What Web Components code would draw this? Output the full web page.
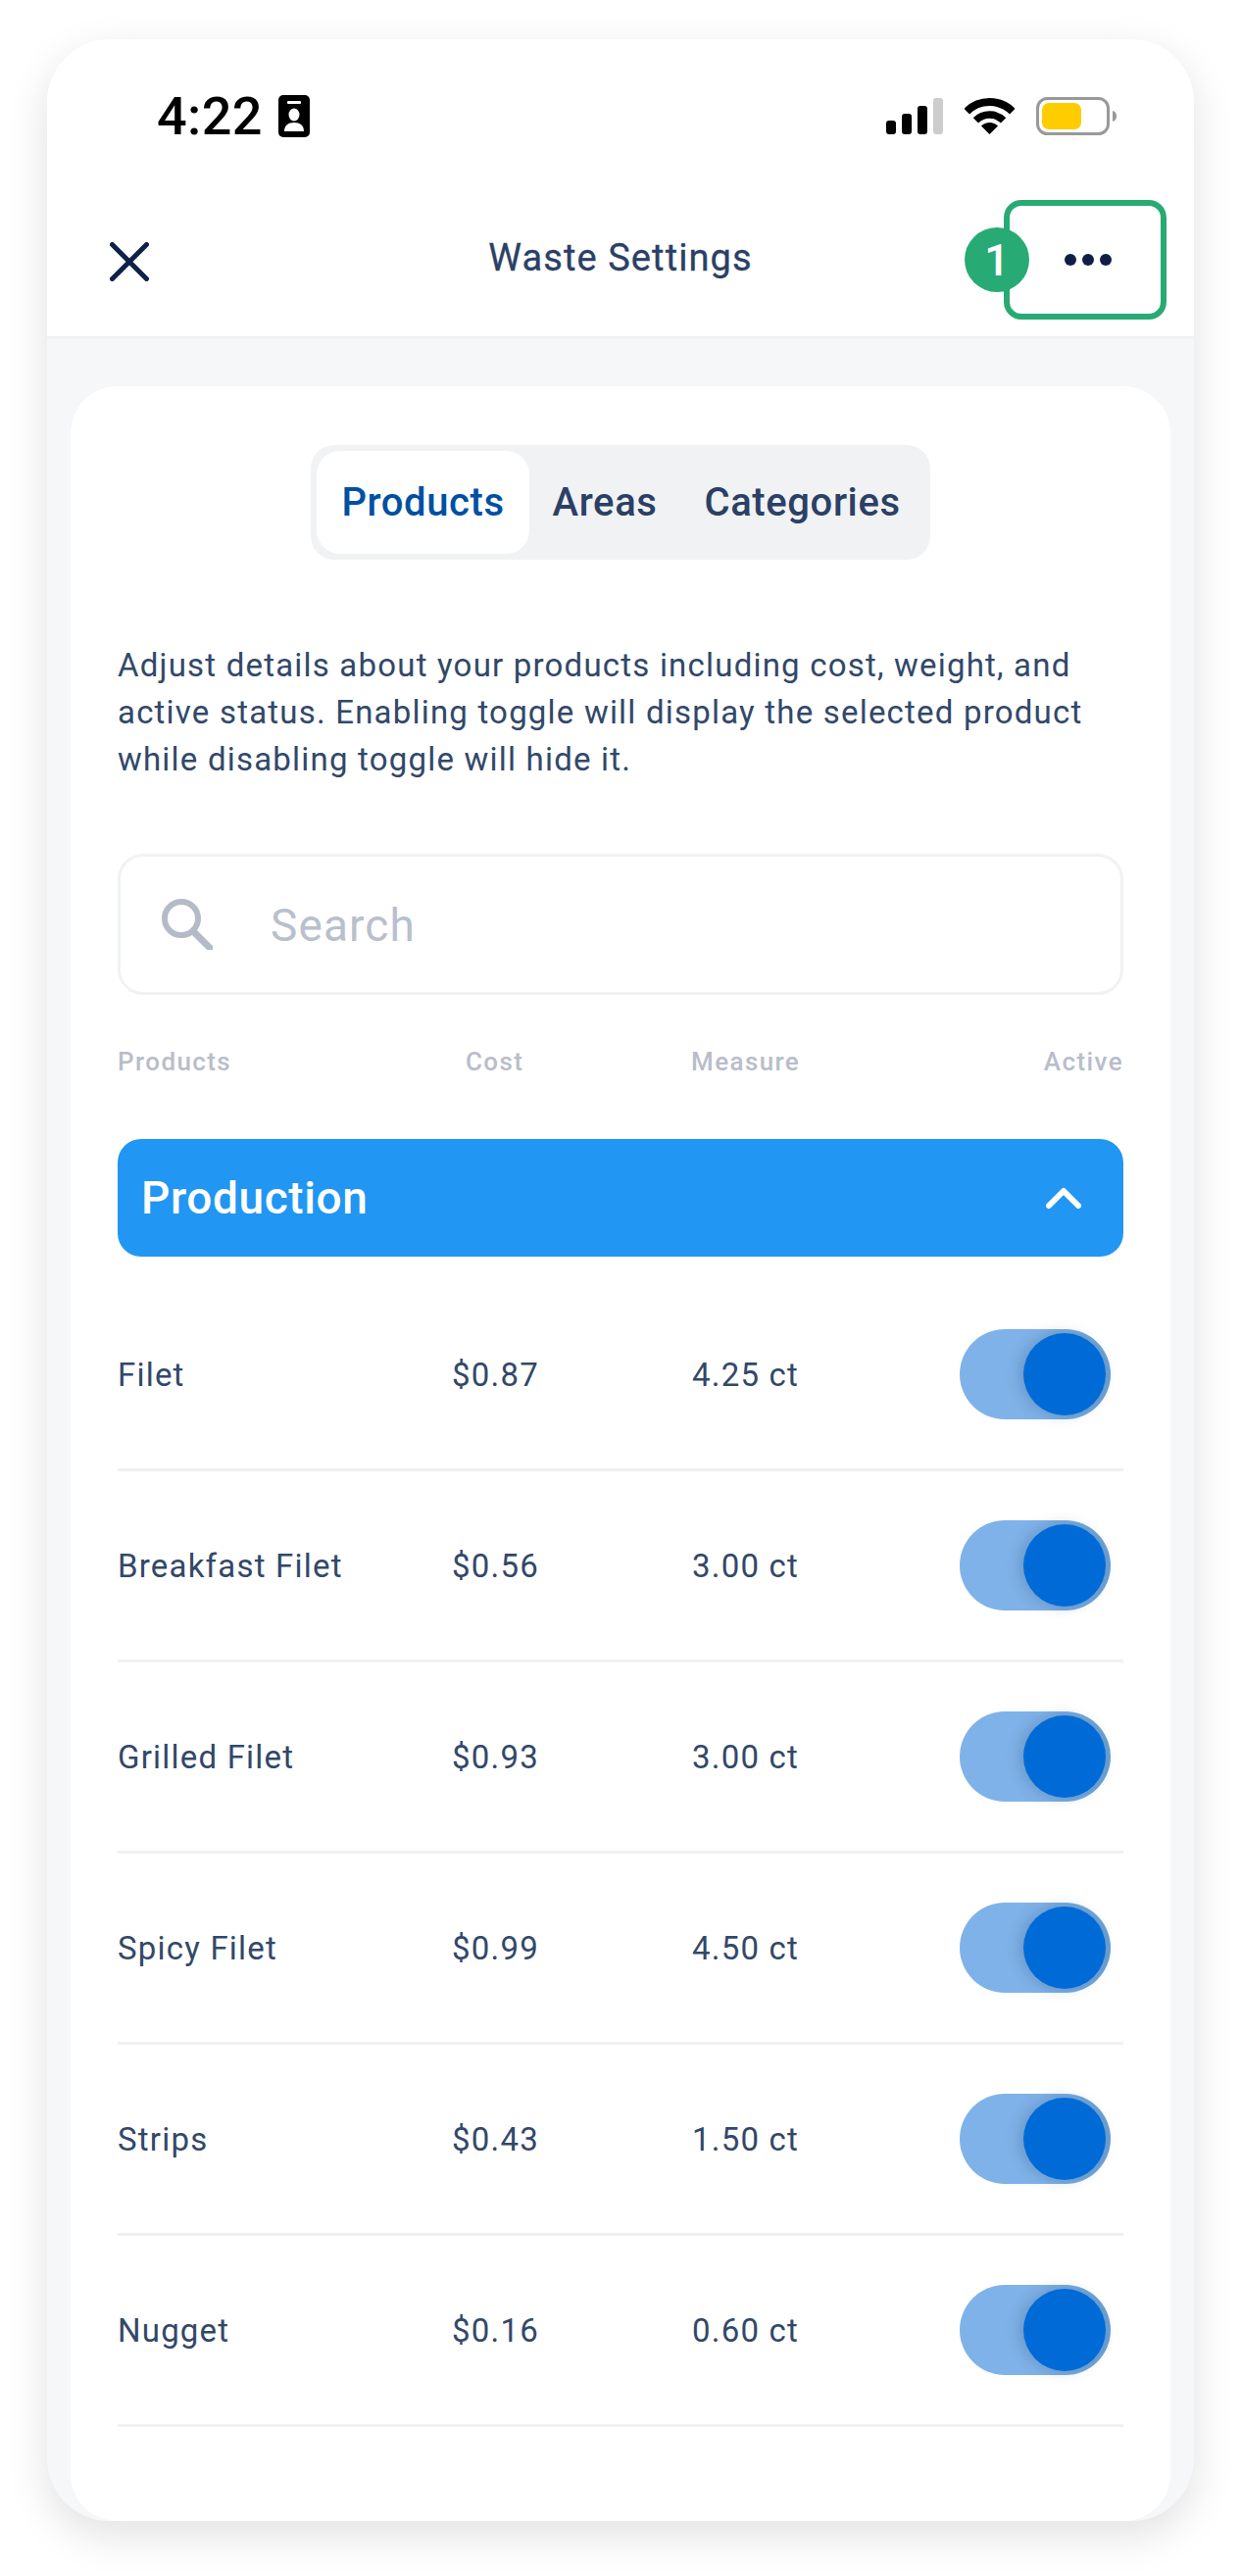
<!DOCTYPE html>
<html lang="en"><head><meta charset="utf-8"><title>Waste Settings</title>
<style>
html,body{margin:0;padding:0;background:#fff}
body{font-family:Roboto,"Liberation Sans",sans-serif;color:#324869;width:1266px;height:2628px;overflow:hidden}
</style></head><body>
<phone-frame>
  <status-bar slot="status" time="4:22"></status-bar>
  <nav-bar slot="nav" title-text="Waste Settings"></nav-bar>
  <settings-card>
    <segment-tabs></segment-tabs>
    <p>Adjust details about your products including cost, weight, and<br>active status. Enabling toggle will display the selected product<br>while disabling toggle will hide it.</p>
    <search-box></search-box>
    <column-head></column-head>
    <group-bar label="Production"></group-bar>
    <product-row name="Filet" cost="$0.87" measure="4.25 ct"></product-row>
    <product-row name="Breakfast Filet" cost="$0.56" measure="3.00 ct"></product-row>
    <product-row name="Grilled Filet" cost="$0.93" measure="3.00 ct"></product-row>
    <product-row name="Spicy Filet" cost="$0.99" measure="4.50 ct"></product-row>
    <product-row name="Strips" cost="$0.43" measure="1.50 ct"></product-row>
    <product-row name="Nugget" cost="$0.16" measure="0.60 ct"></product-row>
  </settings-card>
</phone-frame>
<script>
function def(name, html){
  customElements.define(name, class extends HTMLElement{
    connectedCallback(){
      if(this.shadowRoot) return;
      const r=this.attachShadow({mode:'open'});
      r.innerHTML = typeof html==='function' ? html(this) : html;
    }
  });
}
def('phone-frame',`<style>
:host{display:flex;flex-direction:column;box-sizing:border-box;width:1170px;height:2532px;margin:40px 0 0 48px;background:#f6f7f9;border-radius:64px;overflow:hidden;box-shadow:0 14px 44px rgba(0,0,0,.12)}
header{background:#fff;border-bottom:3px solid #f0f1f3;padding-bottom:10px;flex:none}
main{flex:1;display:flex;padding:48px 24px 0;min-height:0}
</style><header><slot name="status"></slot><slot name="nav"></slot></header><main><slot></slot></main>`);
def('status-bar',h=>`<style>
:host{display:flex;align-items:center;height:157px;box-sizing:border-box;padding:0 79px 0 112px;font-family:Roboto,sans-serif;color:#000}
.t{font-size:54px;font-weight:500;line-height:1;letter-spacing:.4px}
.id{margin-left:16px;display:block}
.r{margin-left:auto;display:flex;align-items:center}
svg{display:block}
</style><span class="t">${h.getAttribute('time')}</span>
<svg class="id" width="32" height="43" viewBox="0 0 32 43"><rect width="32" height="43" rx="5" fill="#000"/><rect x="9" y="6" width="14" height="3" rx="1" fill="#fff"/><ellipse cx="16" cy="20" rx="5.500" ry="6.500" fill="#fff"/><path d="M6 37c0-6 4-9 10-9s10 3 10 9z" fill="#fff"/></svg>
<div class="r">
<svg width="58" height="37" viewBox="0 0 58 37"><rect x="0" y="23" width="10" height="14" rx="3"/><rect x="16" y="16" width="10" height="21" rx="3"/><rect x="32" y="8" width="10" height="29" rx="3"/><rect x="48" y="0" width="10" height="37" rx="3" fill="#ccc"/></svg>
<svg style="margin-left:22px" width="51" height="37" viewBox="0 0 51 37"><path d="M2.200 13.700A33 33 0 0 1 48.800 13.700" fill="none" stroke="#000" stroke-width="8"/><path d="M11.400 22.900A20 20 0 0 1 39.600 22.900" fill="none" stroke="#000" stroke-width="7.500"/><path d="M25.500 37L17 28.500A12 12 0 0 1 34 28.500Z"/></svg>
<svg style="margin-left:22px" width="82" height="39" viewBox="0 0 82 39"><rect x="1.500" y="1.500" width="72" height="36" rx="10" fill="#fff" stroke="#999" stroke-width="3"/><rect x="6" y="6" width="40" height="27" rx="7" fill="#fc0"/><path d="M78 14c2.500 .5 4 2.500 4 5.500s-1.500 5-4 5.500z" fill="#999"/></svg>
</div>`);
def('nav-bar',h=>`<style>
:host{display:grid;grid-template-columns:1fr auto 1fr;align-items:center;height:136px;padding:0 28px;font-family:Roboto,sans-serif}
h1{margin:-4px 0 0;font-size:38px;font-weight:400;color:#2b4065;letter-spacing:1.1px;white-space:nowrap;-webkit-text-stroke:.3px #2b4065}
.x{display:block;margin:3px 0 0 36px}
.m{justify-self:end;position:relative;box-sizing:border-box;width:166px;height:122px;padding:0 0 1px 6px;border:6px solid #28aa74;border-radius:18px;display:flex;align-items:center;justify-content:center;gap:6px}
.m i{width:12px;height:12px;border-radius:50%;background:#0e1f47;display:block}
.b{position:absolute;left:-46px;top:22px;width:66px;height:66px;border-radius:50%;background:#28aa74;color:#fff;font-size:45px;font-weight:500;display:flex;align-items:center;justify-content:center}
</style>
<svg class="x" width="40" height="40" viewBox="0 0 40 40"><path d="M2.500 2.500L37.500 37.500M37.500 2.500L2.500 37.500" stroke="#0e2148" stroke-width="5" stroke-linecap="round"/></svg>
<h1>${h.getAttribute('title-text')}</h1>
<div class="m"><span class="b">1</span><i></i><i></i><i></i></div>`);
def('settings-card',`<style>
:host{display:block;flex:1;box-sizing:border-box;background:#fff;border-radius:48px;padding:60px 48px 0;font-family:Roboto,sans-serif}
::slotted(p){margin:84px 0 72px;font-size:33px;line-height:48px;letter-spacing:1.2px;color:#324869}
</style><slot></slot>`);
def('segment-tabs',`<style>
:host{display:flex;justify-content:center}
.w{display:flex;box-sizing:border-box;height:117px;padding:6px;background:#f0f2f4;border-radius:24px;font-size:40px;font-weight:500;color:#2b4065}
span{display:flex;align-items:center;padding:0 25px 0;letter-spacing:.6px}
.a{background:#fff;border-radius:24px;color:#0050a2}
span:nth-child(2){padding:0 24px}
span:nth-child(3){padding:0 24px}
</style><div class="w"><span class="a">Products</span><span>Areas</span><span>Categories</span></div>`);
def('search-box',`<style>
:host{display:flex;align-items:center;box-sizing:border-box;height:144px;border:3px solid #f0f2f4;border-radius:26px;padding:0 0 0 42px;font-size:46px;color:#b9bfcc;letter-spacing:1.1px}
svg{display:block;margin-right:59px}
span{position:relative;top:1px}
</style><svg width="52" height="52" viewBox="0 0 52 52"><circle cx="20" cy="20" r="17" fill="none" stroke="#b4bac7" stroke-width="6"/><path d="M32 33L49 50" stroke="#b4bac7" stroke-width="7" stroke-linecap="round"/></svg><span>Search</span>`);
def('column-head',`<style>
:host{display:grid;grid-template-columns:355px 230px 1fr auto;align-items:center;height:40px;margin:48px 0 59px;font-size:26px;font-weight:500;color:#b8bdca;letter-spacing:1.4px}
</style><span>Products</span><span>Cost</span><span>Measure</span><span>Active</span>`);
def('group-bar',h=>`<style>
:host{display:flex;align-items:center;justify-content:space-between;box-sizing:border-box;height:120px;margin-bottom:24px;padding:0 43px 0 24px;background:#2196f3;border-radius:24px;color:#fff;font-size:46px;font-weight:500;letter-spacing:.6px}
svg{display:block}
</style><span>${h.getAttribute('label')}</span><svg width="36" height="22" viewBox="0 0 36 22"><path d="M3 19L18 4L33 19" fill="none" stroke="#fff" stroke-width="6" stroke-linecap="round" stroke-linejoin="round"/></svg>`);
def('product-row',h=>`<style>
:host{display:grid;grid-template-columns:341px 245px 1fr auto;align-items:center;box-sizing:border-box;height:195px;border-bottom:3px solid #f0f1f3;padding-right:13px;font-size:33px;letter-spacing:1.2px;color:#324869}
</style><span>${h.getAttribute('name')}</span><span>${h.getAttribute('cost')}</span><span>${h.getAttribute('measure')}</span><toggle-switch></toggle-switch>`);
def('toggle-switch',`<style>
:host{display:block;position:relative;width:154px;height:92px;border-radius:46px;background:linear-gradient(90deg,#7fb2e8 55%,#6a9fd2 100%)}
i{position:absolute;right:5px;top:4px;width:84px;height:84px;border-radius:50%;background:#006bd6;box-shadow:-4px 0 14px rgba(40,70,110,.25)}
</style><i></i>`);
</script>
</body></html>
